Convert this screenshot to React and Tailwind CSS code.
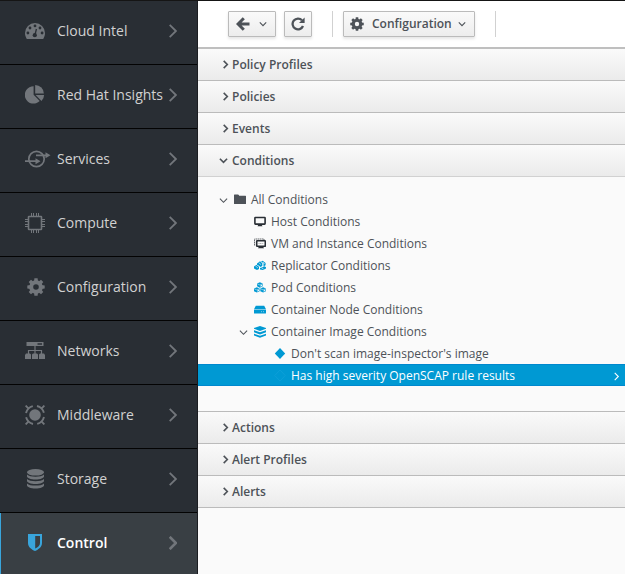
import React from "react";

const TEETH = [0, 45, 90, 135, 180, 225, 270, 315];

function Cog({ className }) {
  return (
    <svg viewBox="0 0 18 18" className={className} aria-hidden="true">
      {TEETH.map((angle) => (
        <path key={angle} d="M7 3.5L7.4 0.3H10.6L11 3.5z" fill="currentColor" transform={`rotate(${angle} 9 9)`} />
      ))}
      <circle cx="9" cy="9" r="4.800" fill="none" stroke="currentColor" strokeWidth="4" />
    </svg>
  );
}

function Chevron({ className, down = false, weight = 2 }) {
  return (
    <svg viewBox="0 0 10 10" className={className} fill="none" stroke="currentColor" strokeWidth={weight} aria-hidden="true">
      <path d={down ? "M1 3L5 7L9 3" : "M3 1L7 5L3 9"} />
    </svg>
  );
}

function Gauge() {
  return (
    <svg viewBox="0 0 20 20" className="size-5" aria-hidden="true">
      <path d="M10 2A10 10 0 0 0 0 12c0 2 .5 3.700 1.500 5.400.2.400.5.600.9.600h15.200c.4 0 .7-.2.9-.6 1-1.700 1.500-3.400 1.500-5.400A10 10 0 0 0 10 2z" fill="currentColor" />
      <g fill="#292e34">
        <circle cx="2.900" cy="12" r="1.400" />
        <circle cx="5" cy="7" r="1.400" />
        <circle cx="10" cy="4.900" r="1.400" />
        <circle cx="15" cy="7" r="1.400" />
        <circle cx="17.100" cy="12" r="1.400" />
        <circle cx="9.800" cy="14.200" r="2.100" />
      </g>
      <path d="M10 14L11.400 8" stroke="#292e34" strokeWidth="1.300" />
    </svg>
  );
}

function Pie() {
  return (
    <svg viewBox="0 0 20 20" className="size-5" fill="currentColor" aria-hidden="true">
      <path d="M8.600 1.200V9.800L14.700 16A8.700 8.700 0 1 1 8.600 1.200z" />
      <path d="M10.200 0A8.700 8.700 0 0 1 18.900 8.600H10.200z" />
      <path d="M10.600 10H19.100A8.600 8.600 0 0 1 16.500 16z" />
    </svg>
  );
}

function Services() {
  return (
    <svg viewBox="0 0 26 20" className="h-5 w-[26px] shrink-0" fill="none" stroke="currentColor" strokeWidth="1.700" aria-hidden="true">
      <circle cx="11.500" cy="10" r="7.700" />
      <path d="M11 6.300H21M0 12.200H11" />
      <path d="M20.500 3.300L25.500 6.300L20.500 9.300zM10.500 9.200L15.500 12.200L10.500 15.200z" fill="currentColor" stroke="none" />
    </svg>
  );
}

function Chip() {
  return (
    <svg viewBox="0 0 20 20" className="size-5" fill="none" stroke="currentColor" aria-hidden="true">
      <rect x="3.500" y="3.500" width="13" height="13" rx="0.500" strokeWidth="1.600" />
      <path d="M6.500 0V3M8.500 0V3M11.500 0V3M13.500 0V3M6.500 17V20M8.500 17V20M11.500 17V20M13.500 17V20M0 6.500H3M0 8.500H3M0 11.500H3M0 13.500H3M17 6.500H20M17 8.500H20M17 11.500H20M17 13.500H20" />
    </svg>
  );
}

function Network() {
  return (
    <svg viewBox="0 0 20 20" className="size-5" aria-hidden="true">
      <path fillRule="evenodd" d="M1.500 1H18.500V5H1.500zM12.500 2.300V3.700H17V2.300z" fill="currentColor" />
      <path d="M10 5V13M3.500 13V9.500H16.500V13" fill="none" stroke="currentColor" strokeWidth="1.200" />
      <path d="M1 12.500H5L6 13.500V18H0V14zM8 12.500H12L13 13.500V18H7V13.500zM15 12.500H19L20 14V18H14V13.500z" fill="currentColor" />
    </svg>
  );
}

function Middleware() {
  return (
    <svg viewBox="0 0 20 20" className="size-5" fill="none" stroke="currentColor" strokeWidth="1.900" aria-hidden="true">
      <circle cx="10" cy="10" r="5.800" fill="currentColor" stroke="none" />
      {[0, 90, 180, 270].map((angle) => (
        <path key={angle} d="M0.600 0.600L3.600 3.600M7.800 1.100C5.900 1.600 4.500 2.500 3.400 3.600C2.300 4.700 1.500 6.100 1 8" transform={`rotate(${angle} 10 10)`} />
      ))}
    </svg>
  );
}

function Database() {
  return (
    <svg viewBox="0 0 20 20" className="size-5" fill="currentColor" aria-hidden="true">
      <ellipse cx="10.500" cy="3.300" rx="8.500" ry="3.300" />
      {[5.600, 10, 14.400].map((y) => (
        <path key={y} transform={`translate(0 ${y})`} d="M2 0C3.500 1.700 7 2.200 10.500 2.200S17.500 1.700 19 0V2C19 3.500 15.500 5 10.500 5S2 3.500 2 2z" />
      ))}
    </svg>
  );
}

function Shield() {
  return (
    <svg viewBox="0 0 20 20" className="size-5" aria-hidden="true">
      <path fillRule="evenodd" d="M3 1H17V10C17 14 13.500 16.500 10 18C6.500 16.500 3 14 3 10zM10.200 3V15.600C13 14 15 12.500 15 10V3z" fill="currentColor" />
    </svg>
  );
}

function Folder() {
  return (
    <svg viewBox="0 0 12 12" className="size-3" fill="currentColor" aria-hidden="true">
      <path d="M0 1Q0 .5 .5 .5H4Q4.500 .5 4.800 1L5.200 1.700H11.500Q12 1.700 12 2.200V9.500Q12 10 11.500 10H.5Q0 10 0 9.500z" />
    </svg>
  );
}

function Screen() {
  return (
    <svg viewBox="0 0 12 12" className="size-3" aria-hidden="true">
      <rect x="0.900" y="1.500" width="10.200" height="6.600" rx="0.500" fill="none" stroke="currentColor" strokeWidth="1.600" />
      <path d="M4.500 8.500H7.500L8.500 10.200H3.500z" fill="currentColor" />
    </svg>
  );
}

function VirtualScreen() {
  return (
    <svg viewBox="0 0 12 12" className="size-3" fill="none" stroke="currentColor" aria-hidden="true">
      <path d="M0.500 7.500V1H10V2" strokeOpacity="0.700" strokeDasharray="1.500 0.500" />
      <rect x="2.700" y="2.700" width="8.600" height="5.600" rx="0.500" strokeWidth="1.600" />
      <path d="M4.500 5.500H9.500" strokeOpacity="0.500" strokeWidth="0.800" strokeDasharray="1 0.600" />
      <path d="M5 8.500H9L10 10.300H4z" fill="currentColor" stroke="none" />
    </svg>
  );
}

function Replicator() {
  return (
    <svg viewBox="0 0 12 12" className="size-3" aria-hidden="true">
      <path d="M3 3.400L6 1.300L8.300 3.300V6L6.300 7L5 5.800L3 4.800zM7 1.400L8.700 0.700L11.600 3V5.300L9.500 6.500V3.300zM0 6.500L2.300 4.800L5 6.800V8.900L3 10L0 8.500zM6 8.100L9 6.900L10.500 6.200L12 7.300V8.400L9 10.100L6 9.400z" fill="currentColor" />
      <path d="M4.700 2.600L7 4.600M1.300 5.800L3.900 7.900M9 2L10.500 4M7.500 7.800L9.500 9" stroke="#fafafa" strokeWidth="0.600" />
    </svg>
  );
}

function Pod() {
  return (
    <svg viewBox="0 0 12 12" className="size-3" aria-hidden="true">
      {["translate(3.100 0.300)", "translate(0 5.200)", "translate(6.300 5.200)"].map((place) => (
        <g key={place} transform={place}>
          <path d="M0 1.300L2.800 0L5.600 1.300V4L2.800 5.400L0 4z" fill="currentColor" />
          <path d="M0.300 1.600L2.800 2.700L5.300 1.600" fill="none" stroke="#fafafa" strokeWidth="0.500" />
          <path d="M3.300 3.200L5 2.400V3.600L3.300 4.500z" fill="#fafafa" />
        </g>
      ))}
    </svg>
  );
}

function Drive() {
  return (
    <svg viewBox="0 0 12 12" className="size-3" aria-hidden="true">
      <path d="M1.800 1.700H10.200L12 5.200H0zM0 5.700H12V9Q12 9.500 11.400 9.500H.6Q0 9.500 0 9z" fill="currentColor" />
      <path d="M7 7.700H8M9 7.700H10" stroke="#fafafa" strokeWidth="0.500" />
    </svg>
  );
}

function Layers() {
  return (
    <svg viewBox="0 0 12 12" className="size-3" fill="currentColor" aria-hidden="true">
      <path d="M6 0L12 2V2.800L6 4.900L0 2.800V2zM0 4.200L6 6.200L12 4.200V6.200L6 8.400L0 6.200zM0 7.700L6 9.700L12 7.700V9.600L6 11.800L0 9.600z" />
    </svg>
  );
}

function Diamond({ outline = false }) {
  return (
    <svg viewBox="0 0 12 12" className="size-3" aria-hidden="true">
      <path d="M6 0L11.200 5.500L6 11L0.800 5.500z" fill={outline ? "none" : "currentColor"} stroke={outline ? "currentColor" : "none"} strokeWidth="0.600" />
    </svg>
  );
}

const NAV = [
  { label: "Cloud Intel", icon: <Gauge /> },
  { label: "Red Hat Insights", icon: <Pie /> },
  { label: "Services", icon: <Services /> },
  { label: "Compute", icon: <Chip /> },
  { label: "Configuration", icon: <Cog className="ml-[2px] size-[18px]" /> },
  { label: "Networks", icon: <Network /> },
  { label: "Middleware", icon: <Middleware /> },
  { label: "Storage", icon: <Database /> },
  { label: "Control", icon: <Shield />, active: true },
];

const TREE = [
  { label: "All Conditions", indent: "pl-[21px]", icon: <Folder />, color: "text-[#4d5258]", open: true },
  { label: "Host Conditions", indent: "pl-[41px]", icon: <Screen />, color: "text-[#292e34]" },
  { label: "VM and Instance Conditions", indent: "pl-[41px]", icon: <VirtualScreen />, color: "text-[#292e34]" },
  { label: "Replicator Conditions", indent: "pl-[41px]", icon: <Replicator />, color: "text-[#0099d3]" },
  { label: "Pod Conditions", indent: "pl-[41px]", icon: <Pod />, color: "text-[#0099d3]" },
  { label: "Container Node Conditions", indent: "pl-[41px]", icon: <Drive />, color: "text-[#0099d3]" },
  { label: "Container Image Conditions", indent: "pl-[41px]", icon: <Layers />, color: "text-[#0099d3]", open: true },
  { label: "Don't scan image-inspector's image", indent: "pl-[61px]", icon: <Diamond />, color: "text-[#0099d3]" },
  { label: "Has high severity OpenSCAP rule results", indent: "pl-[61px]", icon: <Diamond outline />, color: "text-[#16a3dc]", selected: true },
];

function NavItem({ item }) {
  return (
    <li className="border-b border-[#030303]">
      <a
        href="#"
        aria-current={item.active ? "page" : undefined}
        className={
          item.active
            ? "flex h-[63px] items-center border-l border-[#39a5dc] bg-[#393f44] pr-5 pb-1 pl-6 text-sm font-semibold text-white"
            : "flex h-[63px] items-center pr-5 pb-1 pl-[25px] text-sm text-[#d1d1d1]"
        }
      >
        <span className={item.active ? "mr-3 flex w-5 shrink-0 text-[#39a5dc]" : "mr-3 flex w-5 shrink-0 text-[#72767b]"}>{item.icon}</span>
        <span className="flex-1 whitespace-nowrap">{item.label}</span>
        <svg viewBox="0 0 8 14" className="h-[14px] w-2 shrink-0 text-[#72767b]" fill="none" stroke="currentColor" strokeWidth={item.active ? 2.600 : 1.800} aria-hidden="true">
          <path d="M0.700 0.800L6.900 7L0.700 13.200" />
        </svg>
      </a>
    </li>
  );
}

function Section({ title, open = false, children }) {
  return (
    <section>
      <h2>
        <button
          type="button"
          aria-expanded={open}
          className={
            "flex h-8 w-full items-center border-b bg-linear-to-b from-[#fafafa] to-[#ebebeb] pl-[21px] text-left text-xs font-semibold text-[#4d5258] " +
            (open ? "border-[#d1d1d1]" : "border-[#bbbbbb]")
          }
        >
          <span className="flex w-[13px]">
            <Chevron down={open} weight={1.800} className={open ? "size-[9px]" : "ml-[2px] size-[9px]"} />
          </span>
          {title}
        </button>
      </h2>
      {children}
    </section>
  );
}

function TreeRow({ node }) {
  return (
    <li role="treeitem" aria-selected={Boolean(node.selected)} aria-expanded={node.open}>
      <button
        type="button"
        className={
          "flex h-[22px] w-full items-center pt-[2px] pr-1 text-left text-xs " +
          node.indent +
          (node.selected ? " border-y border-[#0088ce] bg-[#0099d3] text-white" : " text-[#4d5258]")
        }
      >
        <span className="flex w-[15px] shrink-0">{node.open && <Chevron down weight={1.200} className="size-[9px]" />}</span>
        <span className={"mr-[5px] flex w-3 shrink-0 " + node.color}>{node.icon}</span>
        <span className="flex-1 whitespace-nowrap">{node.label}</span>
        {node.selected && <Chevron weight={1.200} className="size-[9px]" />}
      </button>
    </li>
  );
}

const BUTTON =
  "flex h-[26px] items-center rounded-[1px] border border-[#bbbbbb] bg-linear-to-b from-[#fafafa] to-[#ededed] text-xs font-semibold text-[#4d5258] shadow-[0_2px_3px_rgba(3,3,3,0.1)]";

export default function App() {
  return (
    <div className="flex h-screen overflow-hidden border-t border-[#151515] bg-[#fafafa] font-['Open_Sans',sans-serif]">
      <nav aria-label="Primary" className="w-[198px] shrink-0 overflow-hidden border-r border-[#1b1d21] bg-[#292e34]">
        <ul>
          {NAV.map((item) => (
            <NavItem key={item.label} item={item} />
          ))}
        </ul>
      </nav>
      <main className="min-w-0 flex-1">
        <div role="toolbar" aria-label="Actions" className="flex h-12 items-center border-b-2 border-[#bfbfbf] bg-white pl-[30px]">
          <button type="button" aria-label="Back" className={BUTTON + " w-12 justify-between pr-2 pl-[7px]"}>
            <svg viewBox="0 0 14 14" className="size-[14px]" fill="none" stroke="currentColor" strokeWidth="3" aria-hidden="true">
              <path d="M7.800 1.200L2 7L7.800 12.800M2.500 7H13.500" />
            </svg>
            <Chevron down weight={1.400} className="size-2" />
          </button>
          <button type="button" aria-label="Refresh" className={BUTTON + " ml-2 w-7 justify-center"}>
            <svg viewBox="0 0 14 14" className="size-[14px]" aria-hidden="true">
              <path d="M11 3.300A5.400 5.400 0 1 0 12 9" fill="none" stroke="currentColor" strokeWidth="2.300" />
              <path d="M13.600 0.400V6H8z" fill="currentColor" />
            </svg>
          </button>
          <span className="ml-5 h-[26px] border-l border-[#d1d1d1]" />
          <button type="button" className={BUTTON + " ml-[10px] px-[6px]"}>
            <Cog className="mr-2 size-[14px]" />
            Configuration
            <Chevron down weight={1.400} className="mr-[2px] ml-[6px] size-2" />
          </button>
          <span className="ml-5 h-[26px] border-l border-[#d1d1d1]" />
        </div>
        <Section title="Policy Profiles" />
        <Section title="Policies" />
        <Section title="Events" />
        <Section title="Conditions" open>
          <ul role="tree" aria-label="Conditions" className="border-b border-[#bbbbbb] pt-[11px] pb-[25px]">
            {TREE.map((node) => (
              <TreeRow key={node.label} node={node} />
            ))}
          </ul>
        </Section>
        <Section title="Actions" />
        <Section title="Alert Profiles" />
        <Section title="Alerts" />
      </main>
    </div>
  );
}
